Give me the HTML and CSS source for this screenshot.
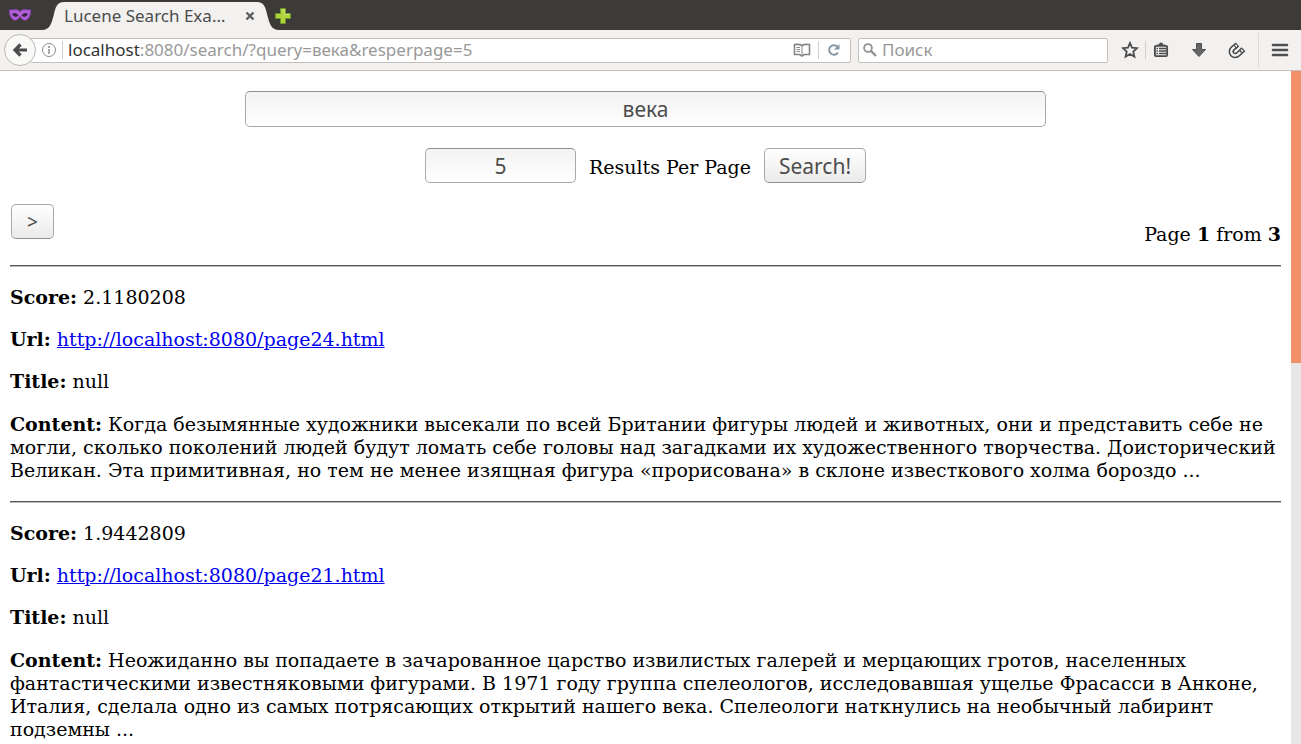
FILE: index.html
```
<!DOCTYPE html>
<html lang="ru">
<head>
<meta charset="utf-8">
<title>Lucene Search Example</title>
<link rel="stylesheet" href="styles.css">
</head>
<body>
<header class="browser">
  <div class="tabbar">
    <svg class="mask" width="24" height="16" viewBox="0 0 24 16"><path d="M1.500 2.500Q3 3.500 6 2.700Q9.500 2 12 4.500Q14.500 2 18 2.700Q21 3.500 22.500 2.500Q23 7.500 21 10.500Q19 13.300 16.500 13.300Q14 13 12 9.500Q10 13 7.500 13.300Q5 13.300 3 10.500Q1 7.500 1.500 2.500Z" fill="#b060d8" stroke="#8a3fb0"/><path d="M4 7Q7.500 4.500 10.500 8.500Q6.500 12 4 7ZM20 7Q16.500 4.500 13.500 8.500Q17.500 12 20 7Z" fill="#3a2642"/></svg>
    <div class="tab">
      <svg class="tab-edge" width="22" height="28" viewBox="0 0 22 28"><path d="M0 28C8 28 9.500 21 11.500 14C13.500 5 15 0 22 0V28Z" fill="#f2f1f0"/></svg>
      <div class="tab-body"><span class="tab-title">Lucene Search Exa…</span>
        <button class="plain tab-close" aria-label="Close tab"><svg width="10" height="10" viewBox="0 0 10 10"><path d="M1.500 1.500L8.500 8.500M8.500 1.500L1.500 8.500" stroke="#5e5e5e" stroke-width="2.400"/></svg></button>
      </div>
      <svg class="tab-edge" width="22" height="28" viewBox="0 0 22 28"><path d="M22 28C14 28 12.500 21 10.500 14C8.500 5 7 0 0 0V28Z" fill="#f2f1f0"/></svg>
    </div>
    <button class="plain new-tab" aria-label="New tab"><svg width="18" height="18" viewBox="0 0 18 18"><path d="M6.500 1.500H11.500V6.500H16.500V11.500H11.500V16.500H6.500V11.500H1.500V6.500H6.500Z" fill="#b2d33c" stroke="#6b962b"/><path d="M7.500 3H10.500V7.500H15" fill="none" stroke="#d0e67c"/></svg></button>
  </div>
  <nav class="toolbar">
    <button class="back" aria-label="Back"><svg width="16" height="16" viewBox="0 0 16 16"><path d="M8.500 2.500L3 8L8.500 13.500M3.500 8H15" fill="none" stroke="#4c4c4c" stroke-width="3.200"/></svg></button>
    <div class="address">
      <svg width="16" height="16" viewBox="0 0 16 16"><circle cx="8" cy="8" r="6.500" fill="none" stroke="#8d8d8d"/><path d="M8 4V6M8 7V12" stroke="#8d8d8d" stroke-width="1.500"/></svg>
      <span class="rule short"></span>
      <a class="url" href="#"><b>localhost</b>:8080/search/?query=века&amp;resperpage=5</a>
      <button class="plain" aria-label="Reader view"><svg width="18" height="16" viewBox="0 0 18 16"><path d="M9 3.500Q7 2 1.500 2.500V12.500H6.500L9 14L11.500 12.500H16.500V2.500Q11 2 9 3.500Z" fill="none" stroke="#858585" stroke-width="1.600"/><path d="M9 4V13" stroke="#858585"/><path d="M3.500 5.500H7M3.500 7.500H7M3.500 9.500H7" stroke="#858585"/></svg></button>
      <span class="rule short"></span>
      <button class="plain" aria-label="Reload"><svg width="16" height="16" viewBox="0 0 16 16"><path d="M12 10.500A4.800 4.800 0 1 1 11.300 4.500" fill="none" stroke="#8797a5" stroke-width="2"/><path d="M13.500 2V7.500H8Z" fill="#8797a5"/></svg></button>
    </div>
    <label class="finder">
      <svg width="14" height="14" viewBox="0 0 14 14"><circle cx="5" cy="5" r="3.900" fill="none" stroke="#929292" stroke-width="1.800"/><path d="M7.900 7.900L13 13" stroke="#929292" stroke-width="2.400"/></svg>
      <input type="text" placeholder="Поиск" aria-label="Поиск">
    </label>
    <div class="tools">
      <div class="pair">
        <button class="plain" aria-label="Bookmark"><svg width="18" height="18" viewBox="0 0 18 18"><path d="M9 2L11 6.700L16 7.200L12.300 10.600L13.400 15.700L9 13L4.600 15.700L5.700 10.600L2 7.200L7 6.700Z" fill="none" stroke="#4c4c4c" stroke-width="1.800"/></svg></button>
        <span class="rule short"></span>
        <button class="plain" aria-label="Bookmarks list"><svg width="18" height="18" viewBox="0 0 18 18"><path d="M5 3.500H7Q7 1.500 9 1.500Q11 1.500 11 3.500H13V5H5Z" fill="#4c4c4c"/><rect x="2.900" y="4.900" width="12.200" height="10.200" rx="1" fill="none" stroke="#4c4c4c" stroke-width="1.900"/><path d="M4.500 7.500H6M7 7.500H14M4.500 10H6M7 10H14M4.500 12.500H6M7 12.500H14" stroke="#4c4c4c" stroke-width="1.300"/></svg></button>
      </div>
      <button class="plain wide" aria-label="Downloads"><svg width="18" height="18" viewBox="0 0 18 18"><path d="M6.500 2.500H11.500V8.500H15.500L9 15.500L2.500 8.500H6.500Z" fill="#666" stroke="#4c4c4c"/></svg></button>
      <button class="plain wide" aria-label="Attachment"><svg width="18" height="18" viewBox="0 0 18 18"><path d="M9.500 3.500L4.500 7.700A3.900 3.900 0 0 0 10 13.400L15.500 8.200" fill="none" stroke="#454545" stroke-width="5.400"/><path d="M8.700 4.200L4.500 7.700A3.900 3.900 0 0 0 10 13.400L14.700 9" fill="none" stroke="#f2f1f0" stroke-width="2.400"/><path d="M6.300 4.500L8.700 7.500M11.300 9L13.700 11.500" stroke="#454545" stroke-width="1.200"/></svg></button>
      <span class="rule"></span>
      <button class="plain" aria-label="Menu"><svg width="18" height="18" viewBox="0 0 18 18"><path d="M2 4H16M2 9H16M2 14H16" stroke="#505050" stroke-width="2.600" stroke-linecap="round"/></svg></button>
    </div>
  </nav>
</header>
<div class="viewport">
  <main class="page">
    <form class="search">
      <input class="field query" type="text" value="века" aria-label="Query">
      <div class="options">
        <input class="field count" id="count" type="text" value="5">
        <label for="count">Results Per Page</label>
        <button class="push" type="button">Search!</button>
      </div>
    </form>
    <div class="pager">
      <button class="push next" type="button">&gt;</button>
      <p>Page <b>1</b> from <b>3</b></p>
    </div>
    <article class="result">
      <p><b>Score:</b> 2.1180208</p>
      <p><b>Url:</b> <a href="#">http://localhost:8080/page24.html</a></p>
      <p><b>Title:</b> null</p>
      <p class="content"><b>Content:</b> Когда безымянные художники высекали по всей Британии фигуры людей и животных, они и представить себе не могли, сколько поколений людей будут ломать себе головы над загадками их художественного творчества. Доисторический Великан. Эта примитивная, но тем не менее изящная фигура «прорисована» в склоне известкового холма бороздо ...</p>
    </article>
    <article class="result">
      <p><b>Score:</b> 1.9442809</p>
      <p><b>Url:</b> <a href="#">http://localhost:8080/page21.html</a></p>
      <p><b>Title:</b> null</p>
      <p class="content"><b>Content:</b> Неожиданно вы попадаете в зачарованное царство извилистых галерей и мерцающих гротов, населенных фантастическими известняковыми фигурами. В 1971 году группа спелеологов, исследовавшая ущелье Фрасасси в Анконе, Италия, сделала одно из самых потрясающих открытий нашего века. Спелеологи наткнулись на необычный лабиринт подземны ...</p>
    </article>
  </main>
  <div class="scrollbar"><div class="thumb"></div></div>
</div>
</body>
</html>
```
FILE: styles.css
```
* { box-sizing: border-box; }
body {
  margin: 0;
  height: 100vh;
  display: flex;
  flex-direction: column;
  overflow: hidden;
  background: #fff;
  color: #000;
  font: 19px/23px "DejaVu Serif", serif;
}
svg { display: block; flex: none; }
.browser { flex: none; font: 17px/22px "Noto Sans", sans-serif; }
.plain { border: 0; padding: 0; background: none; }

.tabbar {
  display: flex;
  align-items: center;
  height: 30px;
  padding-left: 8px;
  background: #3c3b37;
}
.tab { display: flex; align-self: flex-end; height: 28px; margin-left: 10px; }
.tab-body {
  display: flex;
  align-items: center;
  justify-content: space-between;
  width: 193px;
  background: #f2f1f0;
  color: #4c4c4c;
  white-space: nowrap;
}
.tab-close { padding-right: 2px; }
.new-tab { margin-left: -5px; padding-top: 2px; }

.toolbar {
  display: flex;
  align-items: center;
  height: 41px;
  padding: 0 12px 0 4px;
  background: #f2f1f0;
  border-bottom: 1px solid #c6c1bc;
}
.back {
  z-index: 1;
  flex: none;
  display: grid;
  place-items: center;
  width: 32px;
  height: 32px;
  padding: 0;
  border: 1px solid #bcb7b2;
  border-radius: 50%;
  background: #f9f9f8;
}
.address, .finder {
  display: flex;
  align-items: center;
  height: 25px;
  border: 1px solid #c4bfba;
  border-radius: 2px;
  background: #fff;
}
.address { flex: 1; gap: 5px; margin-left: -6px; padding: 0 6px 0 10px; }
.url { flex: 1; color: #999; text-decoration: none; white-space: nowrap; }
.url b { color: #333; font-weight: 400; }
.address .plain { padding: 0 2px; }
.rule { flex: none; width: 1px; height: 34px; background: #dcd9d6; }
.rule.short { height: 18px; background: #cfcfcf; }
.finder { width: 250px; margin-left: 7px; padding: 0 4px; gap: 5px; }
.finder input {
  flex: 1;
  min-width: 0;
  padding: 0;
  border: 0;
  outline: 0;
  background: none;
  font: inherit;
}
.finder input::placeholder { color: #999; opacity: 1; }
.tools { display: flex; align-items: center; margin-left: 13px; }
.pair { display: flex; align-items: center; gap: 6px; margin-right: 10px; }
.tools .wide { padding: 0 10px; }
.tools > .rule { margin: 0 12px 0 2px; }

.viewport { flex: 1; display: flex; min-height: 0; }
.page { flex: 1; padding: 20px 10px 0; overflow: hidden; }
.scrollbar { width: 10px; background: #e6e6e6; }
.thumb { height: 43.4%; background: #f08f68; }

.search { display: flex; flex-direction: column; align-items: center; gap: 21px; }
.field, .push {
  height: 35px;
  border: 1px solid #a9a9a9;
  border-radius: 5px;
  color: #4c4c4c;
  font: 21px/26px "Noto Sans", sans-serif;
}
.field {
  padding: 0 4px;
  border-top-color: #8e8e8e;
  background: linear-gradient(#f2f2f2, #fff);
  text-align: center;
}
.push {
  padding: 0 14px;
  border-bottom-color: #8f8f8f;
  background: linear-gradient(#fff, #ebeae9);
}
.query { width: 63%; height: 36px; }
.count { width: 151px; }
.options { display: flex; align-items: baseline; gap: 13px; }

.pager { display: flex; justify-content: space-between; padding: 21px 0 19px 1px; }
.pager p { margin: 19px 0 0; }
.next { width: 43px; padding: 0; font-size: 19px; }

.result {
  display: flex;
  flex-direction: column;
  gap: 19px;
  padding: 18px 0 19px;
  border-top: 1px solid #555;
  box-shadow: inset 0 1px #bbb;
}
.result + .result { margin-top: 0; }
.result p { margin: 0; }
.result p:first-child { padding-top: 2px; }
.result .content { padding-top: 1px; }
.result a { color: #0000ee; }
```
